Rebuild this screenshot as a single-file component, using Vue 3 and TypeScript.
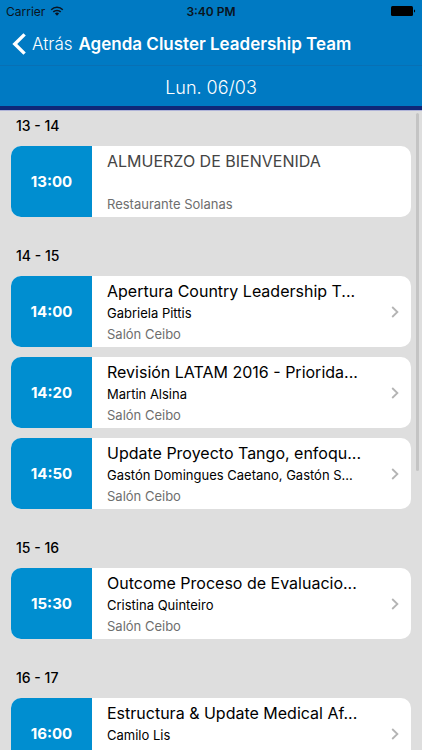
<script setup lang="ts">
interface Talk {
  time: string
  title: string
  speaker?: string
  room?: string
  linked: boolean
}

interface Slot {
  label: string
  talks: Talk[]
}

const slots: Slot[] = [
  {
    label: '13 - 14',
    talks: [
      { time: '13:00', title: 'ALMUERZO DE BIENVENIDA', room: 'Restaurante Solanas', linked: false },
    ],
  },
  {
    label: '14 - 15',
    talks: [
      { time: '14:00', title: 'Apertura Country Leadership T...', speaker: 'Gabriela Pittis', room: 'Salón Ceibo', linked: true },
      { time: '14:20', title: 'Revisión LATAM 2016 - Priorida...', speaker: 'Martin Alsina', room: 'Salón Ceibo', linked: true },
      { time: '14:50', title: 'Update Proyecto Tango, enfoqu...', speaker: 'Gastón Domingues Caetano, Gastón S...', room: 'Salón Ceibo', linked: true },
    ],
  },
  {
    label: '15 - 16',
    talks: [
      { time: '15:30', title: 'Outcome Proceso de Evaluacio...', speaker: 'Cristina Quinteiro', room: 'Salón Ceibo', linked: true },
    ],
  },
  {
    label: '16 - 17',
    talks: [
      { time: '16:00', title: 'Estructura & Update Medical Af...', speaker: 'Camilo Lis', linked: true },
    ],
  },
]
</script>

<template>
  <div class="app">
    <header class="top">
      <div class="status">
        <div class="carrier">
          <span>Carrier</span>
          <svg class="wifi" viewBox="0 0 14 10" width="14" height="10" aria-hidden="true">
            <path d="M1.2 3.7a8.3 8.3 0 0 1 11.6 0" fill="none" stroke="currentColor" stroke-width="1.5" />
            <path d="M3.3 5.9a5.3 5.3 0 0 1 7.4 0" fill="none" stroke="currentColor" stroke-width="1.5" />
            <path d="M7 9.7 4.9 7.5a3 3 0 0 1 4.2 0z" fill="currentColor" />
          </svg>
        </div>
        <span class="clock">3:40 PM</span>
        <svg class="battery" viewBox="0 0 25 10" width="25" height="10" aria-hidden="true">
          <rect x="0" y="0" width="22" height="10" rx="1.5" fill="currentColor" />
          <path d="M23 3.4a1.7 1.7 0 0 1 0 3.2z" fill="currentColor" />
        </svg>
      </div>
      <nav class="bar">
        <a class="back" href="#">
          <svg viewBox="0 0 14 22" width="14" height="22" aria-hidden="true">
            <path d="M12.6 1.4 2.8 11l9.8 9.6" fill="none" stroke="currentColor" stroke-width="3.4" />
          </svg>
          <span>Atrás</span>
        </a>
        <h1 class="title">Agenda Cluster Leadership Team</h1>
      </nav>
      <div class="day">Lun. 06/03</div>
    </header>

    <main class="body">
      <div class="list">
        <section v-for="slot in slots" :key="slot.label">
          <h2 class="label">{{ slot.label }}</h2>
          <div class="cards">
            <component
              :is="talk.linked ? 'a' : 'article'"
              v-for="talk in slot.talks"
              :key="talk.time"
              class="card"
              :href="talk.linked ? '#' : undefined"
            >
              <time class="time">{{ talk.time }}</time>
              <div class="info">
                <h3 class="name" :class="{ muted: !talk.linked }">{{ talk.title }}</h3>
                <p class="speaker">{{ talk.speaker }}</p>
                <p class="room">{{ talk.room }}</p>
              </div>
              <svg v-if="talk.linked" class="chevron" viewBox="0 0 8 12" width="8" height="12" aria-hidden="true">
                <path d="M1.2 1 6.4 6l-5.2 5" fill="none" stroke="currentColor" stroke-width="1.8" />
              </svg>
            </component>
          </div>
        </section>
      </div>
      <div class="scroll-thumb"></div>
    </main>
  </div>
</template>

<style>
body {
  margin: 0;
  background: #dedede;
}
</style>

<style scoped>
.app {
  display: flex;
  flex-direction: column;
  height: 100vh;
  background: #dedede;
  color: #000;
  font-family: Inter, "Liberation Sans", sans-serif;
}

h1,
h2,
h3,
p {
  margin: 0;
  font-weight: 400;
}

a {
  color: inherit;
  text-decoration: none;
}

.top {
  flex: none;
  background: #007ac3;
  border-bottom: 4px solid #0f2878;
  box-shadow: 0 1px 0 #b0b4d8;
}

.status {
  display: grid;
  grid-template-columns: 1fr auto 1fr;
  align-items: center;
  height: 22px;
  padding: 0 6px;
  color: #0a1420;
  font-size: 12px;
}

.carrier {
  display: flex;
  align-items: center;
  gap: 5px;
}

.clock {
  font-weight: 600;
}

.battery {
  justify-self: end;
  color: #000;
}

.bar {
  display: flex;
  align-items: center;
  gap: 6px;
  height: 43px;
  padding: 0 12px;
  border-bottom: 1px solid #0870b4;
  color: #fff;
  white-space: nowrap;
}

.back {
  display: flex;
  align-items: center;
  gap: 6px;
  font-size: 17px;
  font-weight: 300;
}

.title {
  font-size: 17px;
  font-weight: 600;
}

.day {
  color: #fff;
  font-size: 18px;
  font-weight: 300;
  line-height: 36px;
  padding-top: 4px;
  text-align: center;
}

.body {
  position: relative;
  flex: 1;
  min-height: 0;
}

.list {
  display: flex;
  flex-direction: column;
  gap: 23px;
  height: 100%;
  padding: 0 11px;
  box-sizing: border-box;
  overflow-y: auto;
  scrollbar-width: none;
}

.label {
  margin: 0 5px 4px;
  font-size: 14px;
  font-weight: 500;
  line-height: 32px;
}

.cards {
  display: flex;
  flex-direction: column;
  gap: 10px;
}

.card {
  display: flex;
  align-items: center;
  height: 71px;
  border-radius: 10px;
  background: #fff;
  overflow: hidden;
}

.time {
  flex: none;
  width: 81px;
  background: #008ed0;
  color: #fff;
  font-size: 15px;
  font-weight: 700;
  line-height: 71px;
  text-align: center;
}

.info {
  flex: 1;
  min-width: 0;
  padding: 0 15px;
  white-space: nowrap;
}

.name {
  font-size: 16px;
  font-weight: 400;
  line-height: 24px;
}

.name.muted {
  color: #444;
}

.speaker,
.room {
  height: 21px;
  font-size: 13px;
  line-height: 21px;
}

.room {
  color: #6e6e6e;
}

.chevron {
  flex: none;
  margin-right: 12px;
  color: #b4b4b4;
}

.scroll-thumb {
  position: absolute;
  top: 3px;
  right: 3px;
  width: 3px;
  height: 56%;
  border-radius: 2px;
  background: #c4c4c4;
}
</style>
